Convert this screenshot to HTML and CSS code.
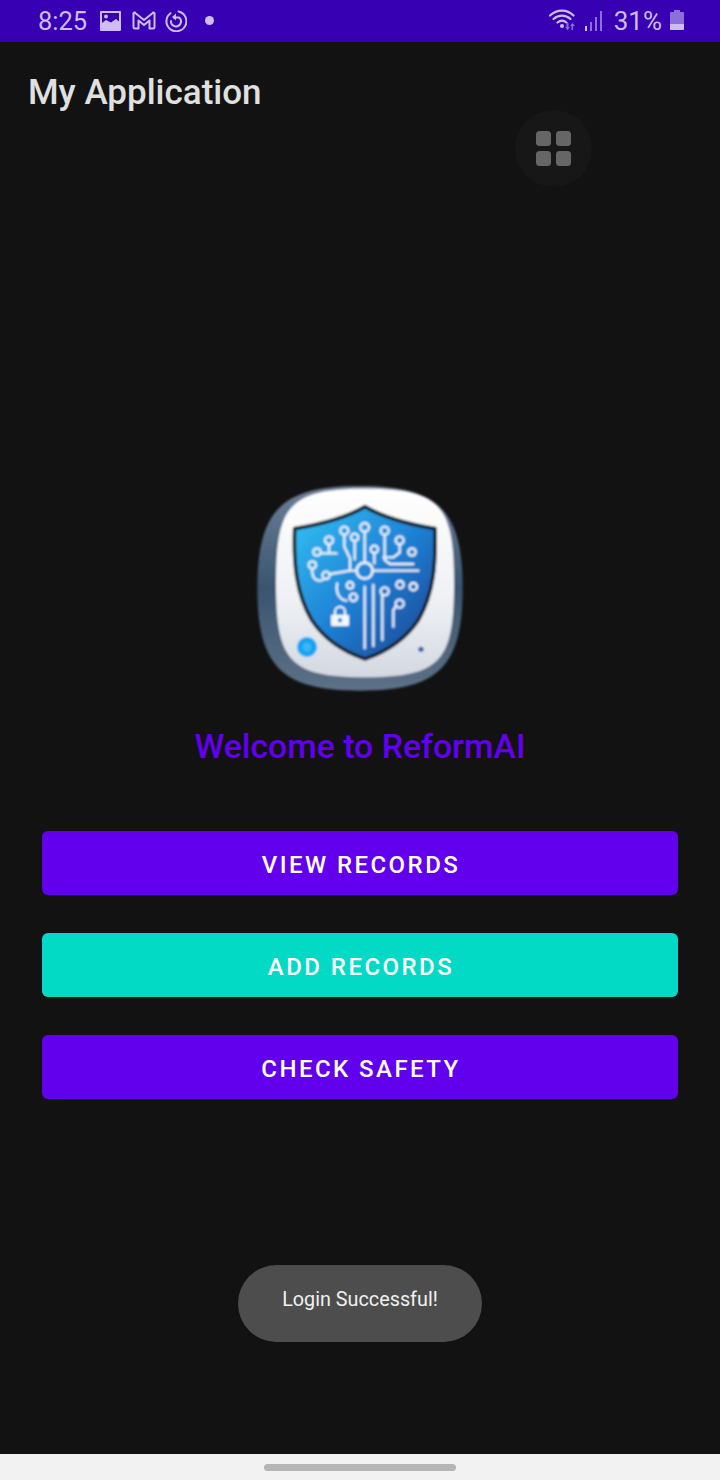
FILE: index.html
```html
<!DOCTYPE html>
<html lang="en">
<head>
<meta charset="utf-8">
<title>My Application</title>
<link rel="stylesheet" href="styles.css">
</head>
<body>
<div class="phone">
  <header class="status">
    <div class="status-side">
      <span class="clock">8:25</span>
      <svg class="ic-img" viewBox="0 0 21 20"><path fill-rule="evenodd" d="M1 0h19a1 1 0 0 1 1 1v18a1 1 0 0 1-1 1H1a1 1 0 0 1-1-1V1a1 1 0 0 1 1-1zM2 2v10l4-3 5 2.500L16 8l3 2.500V2zM6 3.500a2 2 0 1 1 0 4 2 2 0 0 1 0-4z"/></svg>
      <svg class="ic-m" viewBox="0 0 24 20"><path fill="none" stroke-width="2" stroke-linejoin="round" d="M1.500 3v13a1.500 1.500 0 0 0 1.500 1.500h3.500V9.500L12 14l5.500-4.500v8H21a1.500 1.500 0 0 0 1.500-1.500V3a1 1 0 0 0-2-.800L12 9 3.500 2.200a1 1 0 0 0-2 .800z"/></svg>
      <svg class="ic-sync" viewBox="0 0 22 22"><path fill="none" stroke-width="2" stroke-linecap="round" d="M13.500 1.500a10 10 0 1 1-8 1.700"/><path fill="none" stroke-width="2" stroke-linecap="round" d="M6 11a5 5 0 0 0 9.500 2.500 5 5 0 0 0-1.500-6H9"/><path d="M11 3.500v7L7 7z"/></svg>
      <span class="dot"></span>
    </div>
    <div class="status-side">
      <svg class="ic-wifi" viewBox="0 0 28 22"><g fill="none" stroke-width="2.200" stroke-linecap="round"><path d="M1 7.500C8 1 18 1 24.500 7.500"/><path d="M4.500 11c5-4.500 12-4.500 17 0"/><path d="M8.500 14.500c3-2.500 6-2.500 9 0"/></g><circle cx="13" cy="18" r="2"/><path class="dim" d="M17.500 15h2v4h1.500l-2.500 3-2.500-3h1.500zM24 22h-1.500v-4H21l2.500-3 2.500 3h-2z"/></svg>
      <svg class="ic-signal" viewBox="0 0 18 20"><rect x="0" y="15" width="2" height="5"/><rect class="dim" x="5" y="11" width="2" height="9"/><rect class="dim" x="10" y="6" width="2" height="14"/><rect class="dim" x="15" y="0" width="2" height="20"/></svg>
      <span class="battery-text">31%</span>
      <svg class="ic-batt" viewBox="0 0 14 20"><path class="dim" d="M4 0h6v2h3a1 1 0 0 1 1 1v11H0V3a1 1 0 0 1 1-1h3z"/><path d="M0 14h14v5a1 1 0 0 1-1 1H1a1 1 0 0 1-1-1z"/></svg>
    </div>
  </header>

  <main class="app">
    <h1 class="app-title">My Application</h1>

    <div class="fab">
      <svg class="fab-icon" viewBox="0 0 35 35"><rect x="0" y="0" width="15" height="15" rx="3.500"/><rect x="20" y="0" width="15" height="15" rx="3.500"/><rect x="0" y="20" width="15" height="15" rx="3.500"/><rect x="20" y="20" width="15" height="15" rx="3.500"/></svg>
    </div>

    <section class="content">
      <svg class="logo" viewBox="0 0 660 660">
        <defs>
          <linearGradient id="rim" x1="0" y1="0" x2="0" y2="1"><stop offset="0" stop-color="#6c8099"/><stop offset=".5" stop-color="#3a5570"/><stop offset="1" stop-color="#5d7187"/></linearGradient>
          <linearGradient id="face" x1="0" y1="0" x2="0" y2="1"><stop offset="0" stop-color="#ffffff"/><stop offset=".6" stop-color="#eef0f4"/><stop offset="1" stop-color="#d3d8e1"/></linearGradient>
          <linearGradient id="shield" x1="0" y1="0" x2="1" y2="1"><stop offset="0" stop-color="#33c3f3"/><stop offset=".5" stop-color="#1f82d6"/><stop offset="1" stop-color="#1b3f8c"/></linearGradient>
          <filter id="soft" x="-5%" y="-5%" width="110%" height="110%"><feGaussianBlur stdDeviation="2.500"/></filter>
        </defs>
        <g filter="url(#soft)">
          <path fill="url(#rim)" d="M330 18C560 18 638 85 638 325C638 565 560 632 330 632C100 632 22 565 22 325C22 85 100 18 330 18Z"/>
          <path fill="url(#face)" d="M345 26C575 26 612 80 612 310C612 540 575 592 345 592C115 592 78 540 78 310C78 80 115 26 345 26Z"/>
          <path fill="url(#shield)" stroke="#17202e" stroke-width="11" stroke-linejoin="round" d="M345 80C410 118 490 135 555 146C558 250 552 340 505 420C465 480 410 515 345 537C280 515 225 480 185 420C138 340 130 250 134 146C200 135 280 118 345 80Z"/>
          <g fill="none" stroke="#eaf2f9" stroke-width="7" stroke-linecap="round">
            <circle cx="344" cy="142" r="13"/><circle cx="283" cy="152" r="12"/><circle cx="404" cy="152" r="12"/><circle cx="237" cy="181" r="12"/><circle cx="449" cy="181" r="12"/><circle cx="201" cy="216" r="11"/><circle cx="486" cy="216" r="11"/><circle cx="187" cy="255" r="11"/><circle cx="228" cy="286" r="11"/><circle cx="314" cy="172" r="11"/><circle cx="373" cy="208" r="11"/><circle cx="344" cy="272" r="24" stroke-width="8"/><circle cx="300" cy="316" r="10"/><circle cx="310" cy="352" r="11"/><circle cx="404" cy="334" r="12"/><circle cx="450" cy="314" r="11"/><circle cx="490" cy="320" r="11"/><circle cx="449" cy="371" r="12"/>
            <path d="M344 155V248M314 184V238M373 220V250M283 164V200L300 235V272M404 164V240L420 252H490M449 193V218L430 232H400M237 193V215M213 220H260M187 266V280C190 300 205 305 218 300M240 282L300 272H320M368 272H505M262 310C255 340 270 360 290 362"/>
            <path d="M344 320V505M370 315V498M397 346V480M430 440V390L438 378"/>
          </g>
          <path fill="#f4f8fc" fill-rule="evenodd" d="M247 404h46a4 4 0 0 1 4 4v26a4 4 0 0 1-4 4h-46a4 4 0 0 1-4-4v-26a4 4 0 0 1 4-4zM270 414a7 7 0 0 0-3 13h6a7 7 0 0 0-3-13z"/>
          <path fill="none" stroke="#f4f8fc" stroke-width="6" d="M255 405V395a15 15 0 0 1 30 0V405"/>
          <circle cx="171" cy="501" r="30" fill="#17a4f2"/><circle cx="171" cy="501" r="13" fill="#3cb6f4"/>
          <circle cx="513" cy="508" r="8" fill="#2b5ea8"/>
        </g>
      </svg>
      <h2 class="welcome">Welcome to ReformAI</h2>
      <div class="actions">
        <button class="btn btn-primary">VIEW RECORDS</button>
        <button class="btn btn-accent">ADD RECORDS</button>
        <button class="btn btn-primary">CHECK SAFETY</button>
      </div>
    </section>

    <div class="toast">Login Successful!</div>
  </main>

  <footer class="navbar"><span class="home-pill"></span></footer>
</div>
</body>
</html>
```
FILE: styles.css
```css
* { box-sizing: border-box; }
html, body { margin: 0; padding: 0; }
body { background: #121212; font-family: Roboto, "Liberation Sans", sans-serif; }

.phone { width: 720px; height: 1480px; display: flex; flex-direction: column; overflow: hidden; }

/* status bar */
.status {
  height: 42px; flex: none; background: #3700b3; color: #cdbdf0;
  display: flex; justify-content: space-between; align-items: center;
  padding: 0 36px 0 38px;
}
.status svg { fill: #cdbdf0; stroke: #cdbdf0; stroke-width: 0; display: block; }
.status svg .dim { fill: #8c6fd8; }
.status-side { display: flex; align-items: center; }
.clock { font-size: 25.500px; line-height: 42px; width: 49px; color: #cdbdf0; }
.ic-img { width: 21px; height: 20px; margin-left: 13px; }
.ic-m { width: 24px; height: 20px; margin-left: 11px; }
.ic-sync { width: 22px; height: 22px; margin-left: 9px; }
.dot { width: 9px; height: 9px; border-radius: 50%; background: #cdbdf0; margin-left: 18px; margin-bottom: 2px; }
.ic-wifi { width: 28px; height: 22px; margin-top: -4px; }
.ic-signal { width: 18px; height: 20px; margin-left: 8px; }
.battery-text { font-size: 26px; line-height: 42px; margin-left: 11px; color: #cdbdf0; }
.ic-batt { width: 14px; height: 20px; margin-left: 8px; margin-top: -2px; }

/* screen */
.app { position: relative; flex: 1; display: flex; flex-direction: column; background: #121212; }
.app-title { margin: 0; padding: 30px 0 0 28px; font-size: 35px; line-height: 42px; font-weight: 500; color: #e0e0e0; }

.fab {
  position: absolute; left: 515px; top: 68px; width: 77px; height: 77px; border-radius: 50%;
  background: #171717; display: flex; align-items: center; justify-content: center;
}
.fab-icon { width: 35px; height: 35px; fill: #666666; display: block; }

.content { display: flex; flex-direction: column; align-items: center; padding: 366px 42px 0; }
.logo { width: 220px; height: 220px; display: block; flex: none; }
.welcome { margin: 26px 0 0; font-size: 33.800px; line-height: 42px; font-weight: 500; color: #6200ee; }
.actions { width: 100%; margin-top: 63px; display: flex; flex-direction: column; gap: 38px; }
.btn {
  height: 64px; border: 0; border-radius: 6px; color: #fff; width: 100%; padding: 3px 0 0 2px;
  font-family: Roboto, "Liberation Sans", sans-serif; font-size: 24px; font-weight: 500; letter-spacing: 2.450px;
}
.btn-primary { background: #6200ee; }
.btn-accent { background: #03dac5; }

.toast {
  position: absolute; left: 238px; top: 1223px; width: 244px; height: 77px; border-radius: 39px;
  background: #4d4d4d; color: #f0f0f0; font-size: 19.800px; line-height: 24px; text-align: center; padding-top: 23px;
}

/* navigation bar */
.navbar { height: 26px; flex: none; background: #f2f2f2; display: flex; justify-content: center; padding-top: 10px; }
.home-pill { width: 192px; height: 7px; border-radius: 4px; background: #b5b5b5; }
```
